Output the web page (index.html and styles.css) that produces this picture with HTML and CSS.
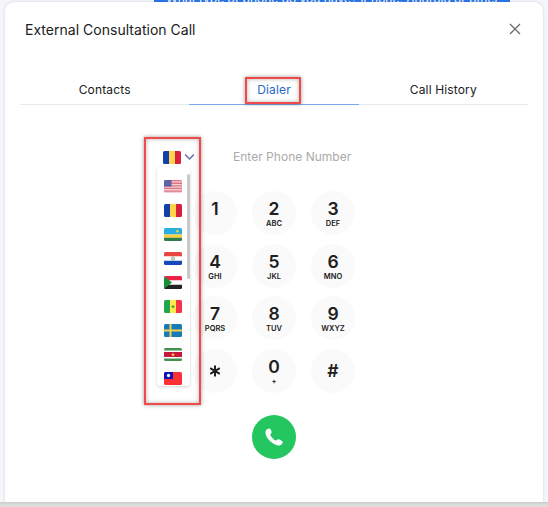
FILE: index.html
```html
<!DOCTYPE html>
<html lang="en">
<head>
<meta charset="utf-8">
<title>External Consultation Call</title>
<link rel="stylesheet" href="styles.css">
</head>
<body>
<div class="page">
  <div class="chat-message"><span>What type of phone do you have? iPhone, Android or other</span></div>
  <main class="modal">
    <header class="header">
      <h1>External Consultation Call</h1>
      <svg class="close" viewBox="0 0 12 12"><path d="M1 1l10 10M11 1L1 11"/></svg>
    </header>
    <nav class="tabs">
      <div class="tab">Contacts</div>
      <div class="tab active">Dialer<i class="mark mark-tab"></i></div>
      <div class="tab">Call History</div>
    </nav>
    <div class="entry">
      <div class="country">
        <svg class="flag" viewBox="0 0 18 12" preserveAspectRatio="none"><path fill="#123fa8" d="M0 0h6v12H0z"/><path fill="#ffd34d" d="M6 0h6v12H6z"/><path fill="#d8203c" d="M12 0h6v12h-6z"/></svg>
        <svg class="chevron" viewBox="0 0 12 8"><path d="M1.200 1.300L6 6.200l4.800-4.900"/></svg>
        <div class="menu">
          <svg class="flag" viewBox="0 0 18 12" preserveAspectRatio="none"><path fill="#f3cfd5" d="M0 0h18v12H0z"/><path stroke="#df7585" stroke-width="1.200" d="M0 .6h18M0 3h18M0 5.400h18M0 7.800h18M0 10.200h18"/><path fill="#565b9d" d="M0 0h7.500v6H0z"/><path stroke="#a9abd0" stroke-width=".5" stroke-dasharray=".6 .8" d="M.8 1.500h6M.8 3h6M.8 4.500h6"/></svg>
          <svg class="flag" viewBox="0 0 18 12" preserveAspectRatio="none"><path fill="#123fa8" d="M0 0h6v12H0z"/><path fill="#ffd34d" d="M6 0h6v12H6z"/><path fill="#d8203c" d="M12 0h6v12h-6z"/></svg>
          <svg class="flag" viewBox="0 0 18 12" preserveAspectRatio="none"><path fill="#27aee5" d="M0 0h18v6H0z"/><path fill="#fdd03b" d="M0 6h18v3H0z"/><path fill="#2e7d4b" d="M0 9h18v3H0z"/><circle cx="13.500" cy="3" r="1.300" fill="#e4cf42"/></svg>
          <svg class="flag" viewBox="0 0 18 12" preserveAspectRatio="none"><path fill="#fff" d="M0 0h18v12H0z"/><path fill="#e84640" d="M0 0h18v4H0z"/><path fill="#1648bd" d="M0 8h18v4H0z"/><circle cx="9" cy="6" r="1.500" fill="#dce7c0" stroke="#719d7a" stroke-width=".7"/></svg>
          <svg class="flag" viewBox="0 0 18 12" preserveAspectRatio="none"><path fill="#fff" d="M0 0h18v12H0z"/><path fill="#ed2146" d="M0 0h18v4H0z"/><path fill="#242424" d="M0 8h18v4H0z"/><path fill="#189038" d="M0 0l8 6-8 6z"/></svg>
          <svg class="flag" viewBox="0 0 18 12" preserveAspectRatio="none"><path fill="#22a451" d="M0 0h6v12H0z"/><path fill="#ffe94d" d="M6 0h6v12H6z"/><path fill="#f5344a" d="M12 0h6v12h-6z"/><path fill="#279b46" d="M9 4l.5 1.500h1.600l-1.300.9.500 1.500L9 7l-1.300.9.500-1.500-1.300-.9h1.600z"/></svg>
          <svg class="flag" viewBox="0 0 18 12" preserveAspectRatio="none"><path fill="#177bb8" d="M0 0h18v12H0z"/><path stroke="#f8d24a" stroke-width="2" d="M6.500 0v12M0 6h18"/></svg>
          <svg class="flag" viewBox="0 0 18 12" preserveAspectRatio="none"><path fill="#fff" d="M0 0h18v12H0z"/><path fill="#43904f" d="M0 0h18v2.200H0zM0 9.800h18V12H0z"/><path fill="#ca153f" d="M0 3.800h18v4.400H0z"/><path fill="#fad449" d="M9 4.200l.5 1.300H11l-1.200.9.500 1.400L9 7l-1.300.8.500-1.400L7 5.500h1.500z"/></svg>
          <svg class="flag" viewBox="0 0 18 12" preserveAspectRatio="none"><path fill="#fb2f35" d="M0 0h18v12H0z"/><path fill="#0c13b2" d="M0 0h9v6.500H0z"/><circle cx="4.500" cy="3.300" r="1.600" fill="#fff"/></svg>
          <i class="scrollbar"></i>
        </div>
        <i class="mark mark-country"></i>
      </div>
      <div class="placeholder">Enter Phone Number</div>
    </div>
    <section class="keypad">
      <div class="key"><b>1</b><small></small></div>
      <div class="key"><b>2</b><small>ABC</small></div>
      <div class="key"><b>3</b><small>DEF</small></div>
      <div class="key"><b>4</b><small>GHI</small></div>
      <div class="key"><b>5</b><small>JKL</small></div>
      <div class="key"><b>6</b><small>MNO</small></div>
      <div class="key"><b>7</b><small>PQRS</small></div>
      <div class="key"><b>8</b><small>TUV</small></div>
      <div class="key"><b>9</b><small>WXYZ</small></div>
      <div class="key symbol"><svg class="star" viewBox="0 0 12 12"><path d="M6 .5v11M1.200 3.200l9.600 5.600M10.800 3.200L1.200 8.800"/></svg></div>
      <div class="key"><b>0</b><small>+</small></div>
      <div class="key symbol"><b>#</b></div>
    </section>
    <div class="call">
      <svg viewBox="0 0 18 18"><path d="M1 2.600C1.700 1 3.500.2 4.600.5c.9.300 2 2.700 2.100 3.700.1 1-1.200 1.500-1.400 2.400-.1 1.300 3.800 5.400 5.400 5.800 1 .2 1.700-1.200 2.700-1.100 1.100.1 4 1.700 4.200 2.600.3 1.300-1.200 3.200-3 3.600C9.600 18.300.2 10.200.5 4.700c0-.8.200-1.500.5-2.100z"/></svg>
    </div>
  </main>
  <footer class="strip"></footer>
</div>
</body>
</html>
```
FILE: styles.css
```css
* { box-sizing: border-box; }

body {
  margin: 0;
  font-family: Inter, "Liberation Sans", sans-serif;
  color: #202020;
}

.page {
  width: 548px;
  height: 507px;
  overflow: hidden;
  display: flex;
  flex-direction: column;
  background: #f5f6fa;
}

.chat-message {
  flex: none;
  width: 356px;
  height: 2px;
  margin-left: 154px;
  padding-left: 12px;
  display: flex;
  align-items: flex-end;
  overflow: hidden;
  background: #2876e8;
  color: #fff;
  font-size: 12px;
  line-height: 7px;
  white-space: nowrap;
}

.modal {
  flex: none;
  width: 538px;
  height: 500px;
  margin-left: 5px;
  background: #fff;
  border-radius: 9px 9px 0 0;
  box-shadow: 0 0 3px rgba(50, 60, 90, .18);
  position: relative;
}

.strip {
  height: 5px;
  background: linear-gradient(#cbcbcb, #dedede 60%);
  position: relative;
}

.header {
  display: flex;
  align-items: center;
  justify-content: space-between;
  height: 54px;
  padding: 0 22px 0 20px;
}

h1 {
  margin: 0;
  font-size: 14px;
  font-weight: 400;
  letter-spacing: .02px;
}

.close { width: 12px; height: 12px; }

.close path { fill: none; stroke: #666; stroke-width: 1.200; }

.tabs {
  display: grid;
  grid-template-columns: repeat(3, 1fr);
  height: 46px;
  margin: 3px 15px 0;
}

.tab {
  position: relative;
  padding-top: 22px;
  border-bottom: 1px solid #e8eaeb;
  height: 46px;
  font-size: 12px;
  font-weight: 400;
  letter-spacing: .15px;
  line-height: 17px;
  text-align: center;
}

.tab.active { color: #2866c7; border-bottom: 1px solid #78a8ec; }

.mark {
  position: absolute;
  border: 2px solid #f14a4a;
  box-shadow: 0 0 4px rgba(0, 0, 0, .4), inset 0 0 4px rgba(0, 0, 0, .3);
}

.mark-tab { left: 56px; top: 18px; width: 56px; height: 27px; }

.entry {
  display: flex;
  height: 50px;
  margin-top: 24px;
  padding-left: 158px;
}

.country {
  position: relative;
  display: flex;
  align-items: center;
  gap: 3px;
  width: 70px;
  height: 56px;
}

.flag { display: block; flex: none; width: 18px; height: 13px; border-radius: 1.500px; }

.chevron { width: 11px; height: 8px; }

.chevron path { fill: none; stroke: #5d6ea6; stroke-width: 1.500; }

.menu {
  position: absolute;
  z-index: 2;
  left: -6px;
  top: 38px;
  width: 33px;
  height: 219px;
  padding: 12.500px 0 0 6.500px;
  display: flex;
  flex-direction: column;
  gap: 11.050px;
  overflow: hidden;
  border-radius: 3px;
  background: #fff;
  box-shadow: 0 1px 3px rgba(0, 0, 0, .18);
}

.scrollbar {
  position: absolute;
  right: 0;
  top: 7px;
  width: 3px;
  height: 105px;
  border-radius: 2px;
  background: #c9c9c9;
}

.mark-country { z-index: 3; left: -19px; top: 8px; width: 57px; height: 268px; }

.placeholder {
  height: 56px;
  line-height: 56px;
  color: #aaa;
  font-size: 12px;
  letter-spacing: .02px;
}

.keypad {
  display: grid;
  grid-template-columns: repeat(3, 44px);
  gap: 8.500px 15px;
  margin: 12px 0 0 188px;
}

.key {
  display: flex;
  flex-direction: column;
  align-items: center;
  width: 44px;
  height: 44px;
  padding-top: 7px;
  border-radius: 50%;
  background: #fafafa;
}

.key b { font-size: 17.500px; font-weight: 600; line-height: 21px; }

.key small { font-size: 7.500px; font-weight: 600; line-height: 9px; }

.key.symbol { justify-content: center; padding: 0; }

.star { width: 12px; height: 12px; }

.star path { fill: none; stroke: #202020; stroke-width: 2; }

.call {
  display: flex;
  align-items: center;
  justify-content: center;
  width: 44px;
  height: 44px;
  margin: 22px 0 0 247px;
  border-radius: 50%;
  background: #24c660;
}

.call svg { width: 18px; height: 18px; fill: #fff; }
```
